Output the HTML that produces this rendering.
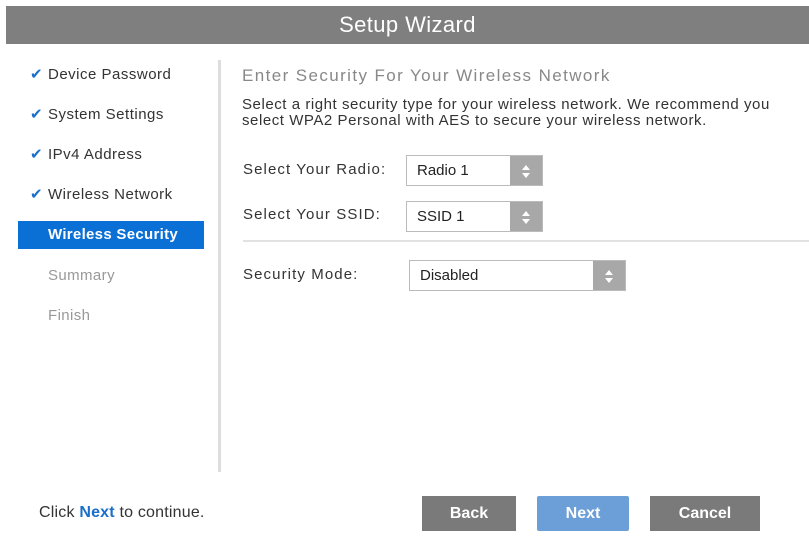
<!DOCTYPE html>
<html><head><style>
*{margin:0;padding:0;box-sizing:border-box}
body{width:809px;height:540px;background:#fff;font-family:"Liberation Sans",Arial,sans-serif;position:relative;overflow:hidden;color:#333}
.abs{position:absolute;white-space:nowrap}
.hdr{left:6px;top:6px;width:803px;height:38px;background:#7f7f7f;color:#fff;font-size:22px;letter-spacing:0.4px;text-align:center;line-height:38px}
.nav{font-size:15px;letter-spacing:0.5px;color:#333;left:30px}
.nav .ck{color:#1a6fc9;font-size:15px;display:inline-block;width:18px;letter-spacing:0}
.act{left:18px;top:221px;width:186px;height:28px;background:#0a70d6;color:#fff;font-weight:bold;font-size:15px;letter-spacing:0.3px;line-height:28px;padding-left:30px}
.dis{color:#999;font-size:15px;letter-spacing:0.4px;left:48px}
.vd{left:218px;top:60px;width:3px;height:412px;background:#ddd}
.ttl{left:242px;top:66px;font-size:17px;letter-spacing:1.4px;color:#888}
.desc{left:242px;top:97px;font-size:15px;line-height:16px;letter-spacing:0.55px;color:#333}
.lbl{font-size:15px;letter-spacing:1.1px;color:#333;left:243px}
.sel{border:1px solid #bbb;background:#fff;font-size:15px;line-height:29px;padding-left:10px;color:#222}
.sp{position:absolute;right:0;top:0;bottom:0;width:32px;background:#a8a8a8}
.sp:before{content:"";position:absolute;left:12px;top:9px;border:4px solid transparent;border-bottom:5px solid #fff;border-top:0}
.sp:after{content:"";position:absolute;left:12px;top:17px;border:4px solid transparent;border-top:5px solid #fff;border-bottom:0}
.btn{top:496px;height:35px;color:#fff;font-weight:bold;font-size:16px;text-align:center;line-height:35px}
</style></head><body>
<div class="abs hdr">Setup Wizard</div>
<div class="abs nav" style="top:65px"><span class="ck">✔</span>Device Password</div>
<div class="abs nav" style="top:105px"><span class="ck">✔</span>System Settings</div>
<div class="abs nav" style="top:145px"><span class="ck">✔</span>IPv4 Address</div>
<div class="abs nav" style="top:185px"><span class="ck">✔</span>Wireless Network</div>
<div class="abs act">Wireless Security</div>
<div class="abs dis" style="top:267px">Summary</div>
<div class="abs dis" style="top:307px">Finish</div>
<div class="abs vd"></div>
<div class="abs ttl">Enter Security For Your Wireless Network</div>
<div class="abs desc">Select a right security type for your wireless network. We recommend you<br>select WPA2 Personal with AES to secure your wireless network.</div>
<div class="abs lbl" style="top:161px">Select Your Radio:</div>
<div class="abs sel" style="left:406px;top:155px;width:137px;height:31px">Radio 1<div class="sp"></div></div>
<div class="abs lbl" style="top:206px">Select Your SSID:</div>
<div class="abs sel" style="left:406px;top:201px;width:137px;height:31px">SSID 1<div class="sp"></div></div>
<div class="abs" style="left:243px;top:240px;width:566px;height:2px;background:#e2e2e2"></div>
<div class="abs lbl" style="top:266px">Security Mode:</div>
<div class="abs sel" style="left:409px;top:260px;width:217px;height:31px">Disabled<div class="sp"></div></div>
<div class="abs" style="left:39px;top:504px;font-size:16px;letter-spacing:0.2px;color:#333">Click <b style="color:#1a6fc9">Next</b> to continue.</div>
<div class="abs btn" style="left:422px;width:94px;background:#7a7a7a">Back</div>
<div class="abs btn" style="left:537px;width:92px;background:#6c9fd8;border-radius:2px">Next</div>
<div class="abs btn" style="left:650px;width:110px;background:#7a7a7a">Cancel</div>
</body></html>
